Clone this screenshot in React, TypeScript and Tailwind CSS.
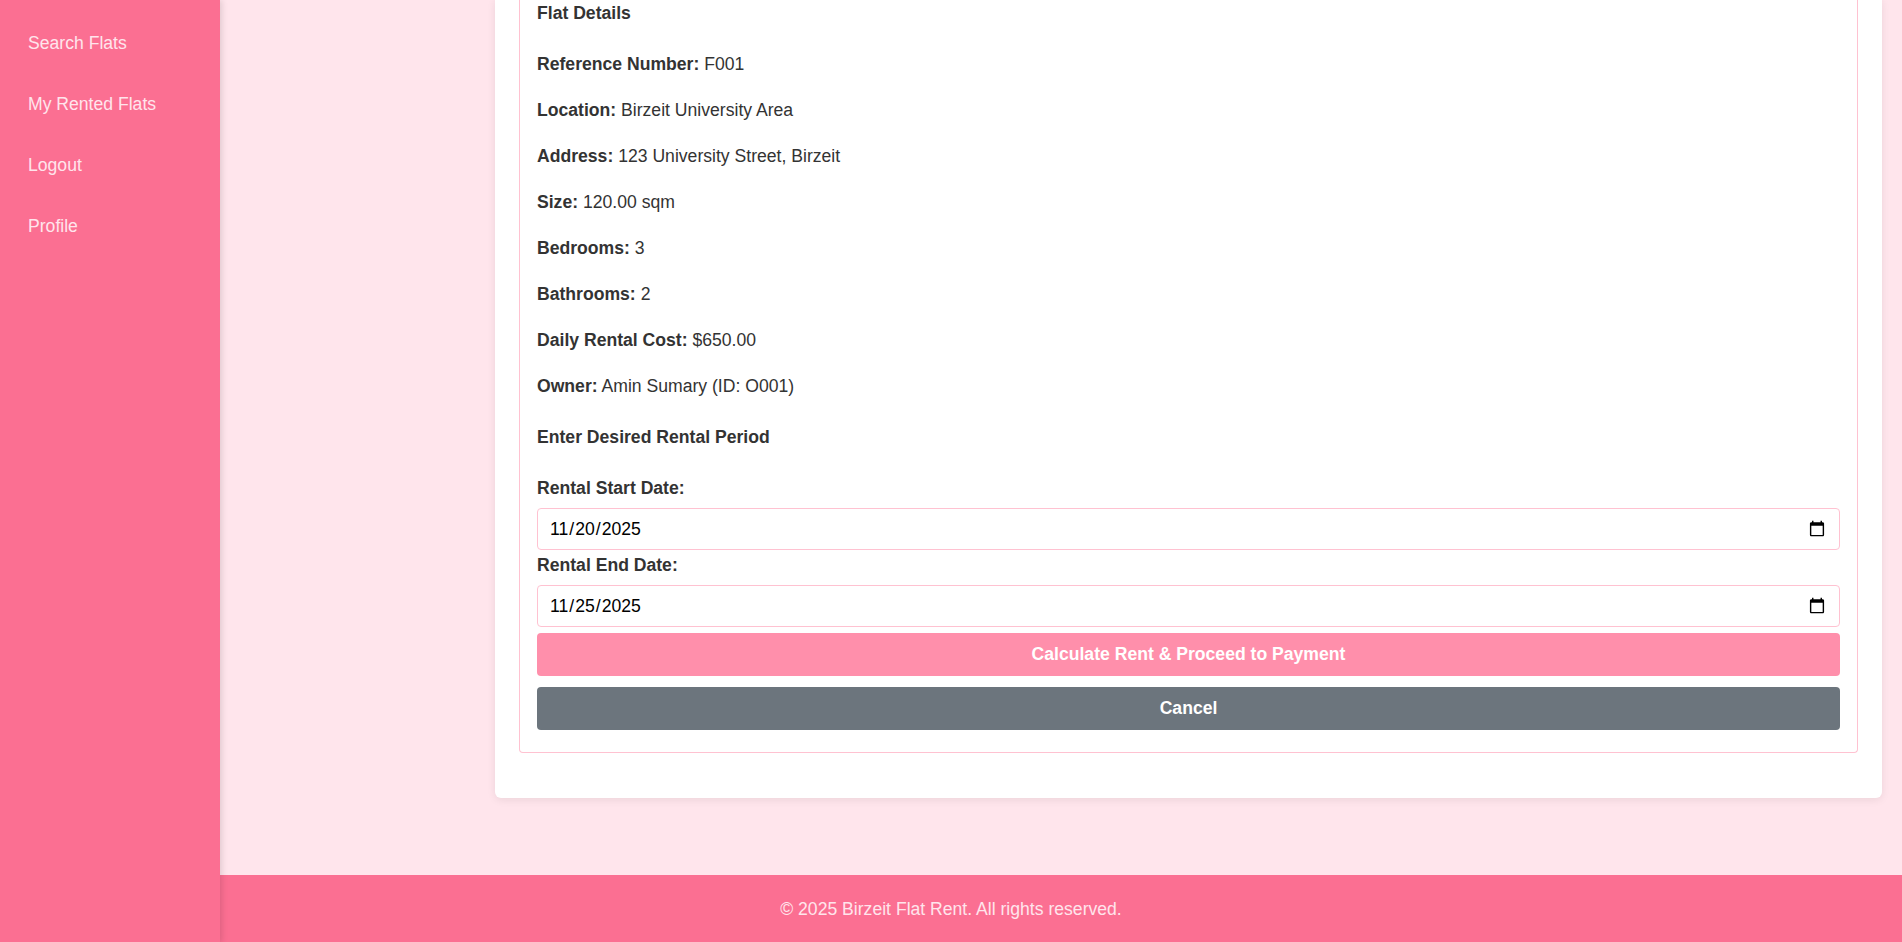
import React from "react";

const details: [string, string][] = [
  ["Reference Number:", "F001"],
  ["Location:", "Birzeit University Area"],
  ["Address:", "123 University Street, Birzeit"],
  ["Size:", "120.00 sqm"],
  ["Bedrooms:", "3"],
  ["Bathrooms:", "2"],
  ["Daily Rental Cost:", "$650.00"],
  ["Owner:", "Amin Sumary (ID: O001)"],
];

const nav = ["Search Flats", "My Rented Flats", "Logout", "Profile"];

export default function App() {
  return (
    <div className="flex min-h-[942px] bg-[#ffe5ec] font-['Liberation_Sans',Arial,sans-serif] text-[17.6px] text-[#333]">
      <aside className="relative z-10 w-[220px] shrink-0 bg-[#fb6f92] pt-[13px] shadow-[2px_0_6px_rgba(0,0,0,0.12)]">
        <nav className="flex flex-col">
          {nav.map((n) => (
            <a key={n} className="flex h-[61px] items-center px-[28px] text-[#ffe5ec]">
              {n}
            </a>
          ))}
        </nav>
      </aside>
      <div className="flex min-w-0 flex-1 flex-col">
        <main className="pb-[77px] pl-[275px] pr-[20px]">
          <div className="rounded-b-[6px] bg-white px-[24px] pb-[45px] shadow-[0_2px_8px_rgba(0,0,0,0.08)]">
            <div className="rounded-b-[4px] border border-t-0 border-[#ffc2d1] px-[17px] pb-[22px]">
              <h3 className="-mt-[1px] mb-[23px] text-[17.6px] font-bold leading-[28px]">Flat Details</h3>
              <div className="flex flex-col gap-[18px]">
                {details.map(([k, v]) => (
                  <p key={k} className="leading-[28px]">
                    <strong className="font-bold">{k}</strong> {v}
                  </p>
                ))}
              </div>
              <h4 className="mt-[23px] text-[17.6px] font-bold leading-[28px]">Enter Desired Rental Period</h4>
              <form className="mt-[23px] flex flex-col">
                <label className="block font-bold leading-[28px]">Rental Start Date:</label>
                <input
                  type="date"
                  defaultValue="2025-11-20"
                  className="mt-[6px] h-[42px] w-full rounded-[4px] border border-[#ffc2d1] bg-white px-[11px] font-['Liberation_Sans',Arial,sans-serif] text-[17.6px] text-black"
                />
                <label className="mt-[1px] block font-bold leading-[28px]">Rental End Date:</label>
                <input
                  type="date"
                  defaultValue="2025-11-25"
                  className="mt-[6px] h-[42px] w-full rounded-[4px] border border-[#ffc2d1] bg-white px-[11px] font-['Liberation_Sans',Arial,sans-serif] text-[17.6px] text-black"
                />
                <button
                  type="button"
                  className="mt-[6px] h-[43px] w-full rounded-[4px] bg-[#ff8fab] text-[17.6px] font-bold text-white"
                >
                  Calculate Rent &amp; Proceed to Payment
                </button>
                <button
                  type="button"
                  className="mt-[11px] h-[43px] w-full rounded-[4px] bg-[#6c757d] text-[17.6px] font-bold text-white"
                >
                  Cancel
                </button>
              </form>
            </div>
          </div>
        </main>
        <footer className="flex h-[68px] items-center justify-center bg-[#fb6f92] pr-[220px] text-[#ffe5ec]">
          © 2025 Birzeit Flat Rent. All rights reserved.
        </footer>
      </div>
    </div>
  );
}
